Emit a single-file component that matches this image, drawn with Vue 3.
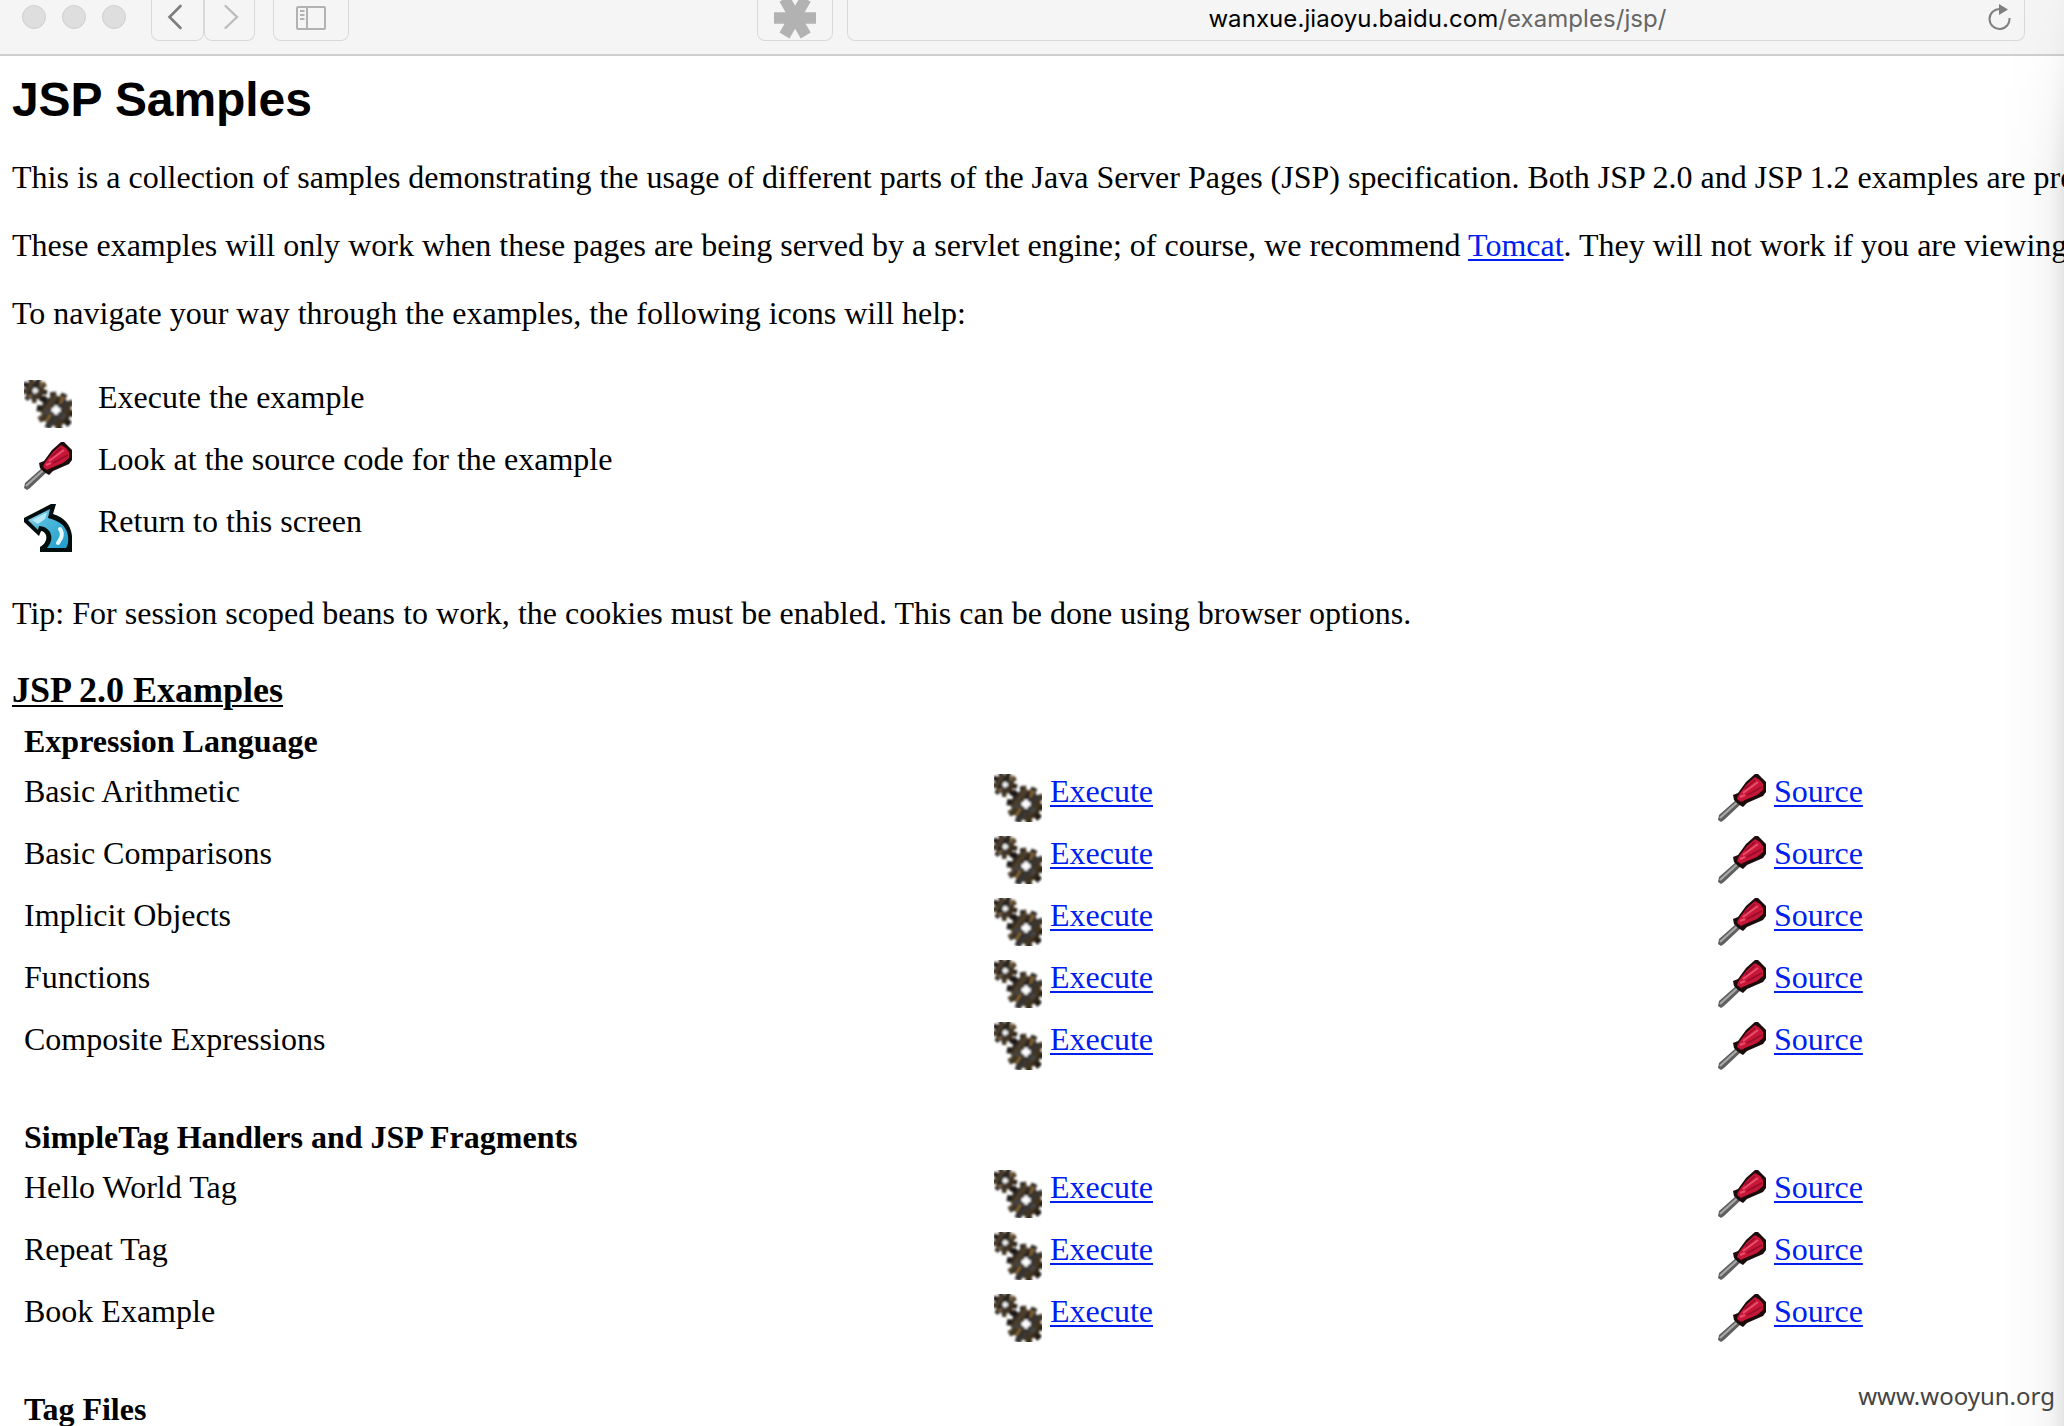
<script setup>
import { h } from 'vue'

const gearPath = (cx, cy, r, teeth, depth, turn) => {
  const pts = []
  for (let i = 0; i < teeth; i++) {
    const step = (Math.PI * 2) / teeth
    const a = i * step + turn
    for (const [k, rad] of [[-0.36, r - depth], [-0.25, r], [0.25, r], [0.36, r - depth]]) {
      pts.push(`${(cx + Math.cos(a + k * step) * rad).toFixed(1)} ${(cy + Math.sin(a + k * step) * rad).toFixed(1)}`)
    }
  }
  return `M${pts.join('L')}Z`
}
const smallGear = gearPath(10.5, 10, 13, 9, 3.4, 0.2)
const bigGear = gearPath(32, 31, 19.5, 10, 4.6, 0.15)

const GearsIcon = () =>
  h('svg', { viewBox: '0 0 48 48', width: 48, height: 48 }, [
    h('defs', [
      h('linearGradient', { id: 'metal', x1: 0, y1: 0, x2: 1, y2: 0.7 }, [
        h('stop', { offset: '0', 'stop-color': '#12100e' }),
        h('stop', { offset: '.25', 'stop-color': '#1b1917' }),
        h('stop', { offset: '.38', 'stop-color': '#54442f' }),
        h('stop', { offset: '.5', 'stop-color': '#23211f' }),
        h('stop', { offset: '.63', 'stop-color': '#363536' }),
        h('stop', { offset: '.78', 'stop-color': '#44351f' }),
        h('stop', { offset: '1', 'stop-color': '#080706' }),
      ]),
      h('filter', { id: 'soften' }, [h('feGaussianBlur', { stdDeviation: 0.9 })]),
    ]),
    h('g', { filter: 'url(#soften)' }, [
      h('path', { d: smallGear, fill: 'url(#metal)' }),
      h('path', { d: 'M16 3l3-2 1 3-4 4zM3 16l4-2 2 2-4 2z', fill: '#7c6037' }),
      h('path', { d: 'M11 8v5.500M8.500 10.700h5.500', stroke: '#f4f4f4', 'stroke-width': 2.8 }),
      h('path', { d: bigGear, fill: 'url(#metal)' }),
      h('path', { d: 'M37 16l4 1-3 6-3 2zM21 40l5-7 2 2-5 8z', fill: '#80612f' }),
      h('path', { d: 'M20 31l5-2 1 4-4 3zM38 33l5 2-4 5-3-2z', fill: '#454446' }),
      h('path', { d: 'M32 25.500v9M27.500 30h9', stroke: '#fff', 'stroke-width': 3.8 }),
    ]),
  ])

const DriverIcon = () =>
  h('svg', { viewBox: '0 0 48 48', width: 48, height: 48 }, [
    h('filter', { id: 'smooth' }, [h('feGaussianBlur', { stdDeviation: 0.75 })]),
    h('g', { filter: 'url(#smooth)' }, [
      h('path', { d: 'M0 46L1 41L18 26L23 30L6 46L3 48Z', fill: '#606060' }),
      h('path', { d: 'M2 44L19 28.500', stroke: '#a9a9a9', 'stroke-width': 2.2 }),
      h('path', { d: 'M15 21L20 19L28 8L37 0H40L48 8V18L45 22L29 29L25 33L20 30L16 26Z', fill: '#1c0a0d' }),
      h('path', { d: 'M20 22L22 19L29 10L37 3L42 6L45 10V16L39 21L27 26L23 28L19 25Z', fill: '#c81438' }),
      h('path', { d: 'M25 19L40 8M22 23L27 21', stroke: '#e8506c', 'stroke-width': 2 }),
      h('path', { d: 'M29 21L44 13M27 15L37 6', stroke: '#970f2b', 'stroke-width': 1.5 }),
    ]),
  ])

const ReturnIcon = () =>
  h('svg', { viewBox: '0 0 48 48', width: 48, height: 48 }, [
    h('defs', [
      h('linearGradient', { id: 'aqua', x1: 0, y1: 0, x2: 1, y2: 1 }, [
        h('stop', { offset: '0', 'stop-color': '#a9e2f3' }),
        h('stop', { offset: '.35', 'stop-color': '#52bade' }),
        h('stop', { offset: '1', 'stop-color': '#1f9cc9' }),
      ]),
      h('filter', { id: 'blend' }, [h('feGaussianBlur', { stdDeviation: 0.75 })]),
    ]),
    h('g', { filter: 'url(#blend)' }, [
      h('path', { d: 'M0 14L27 0H32L29 10Q46 15 48 32V48H16V43Q24 38 22 31Q20 27 17 27L15 32L0 18Z', fill: '#050809' }),
      h('path', { d: 'M4 16L26 5L24 14Q42 18 44 32Q45 40 42 44H23Q30 36 26 28Q22 22 15 22L14 26Z', fill: 'url(#aqua)' }),
      h('path', { d: 'M8 16L23 8.500L21 15L14 20Z', fill: '#b5e9f7' }),
      h('path', { d: 'M36 25Q39 29 37 34L34 39', fill: 'none', stroke: '#e4faff', 'stroke-width': 4, 'stroke-linecap': 'round' }),
    ]),
  ])

const legend = [
  { icon: GearsIcon, text: 'Execute the example' },
  { icon: DriverIcon, text: 'Look at the source code for the example' },
  { icon: ReturnIcon, text: 'Return to this screen' },
]
const groups = [
  {
    title: 'Expression Language',
    items: ['Basic Arithmetic', 'Basic Comparisons', 'Implicit Objects', 'Functions', 'Composite Expressions'],
  },
  { title: 'SimpleTag Handlers and JSP Fragments', items: ['Hello World Tag', 'Repeat Tag', 'Book Example'] },
  { title: 'Tag Files', items: [] },
]
</script>

<template>
  <div class="window">
    <header class="toolbar">
      <div class="lights"><i></i><i></i><i></i></div>
      <div class="btn back">
        <svg width="52" height="41" viewBox="0 0 52 41"><path d="M28.500 6L17.500 17L28.500 28" fill="none" stroke="#7d7d7d" stroke-width="2.600" stroke-linecap="round" /></svg>
      </div>
      <div class="btn forward">
        <svg width="51" height="41" viewBox="0 0 51 41"><path d="M20.500 6L32 17L20.500 28" fill="none" stroke="#bdbdbd" stroke-width="2.400" stroke-linecap="round" /></svg>
      </div>
      <div class="btn sidebar">
        <svg width="76" height="41" viewBox="0 0 76 41"><g fill="none" stroke="#b2b2b2" stroke-width="2"><rect x="23" y="7" width="28" height="22" rx="1" /><path d="M33 7V29M26 11H30.500M26 15H30.500M26 19H30.500" /></g></svg>
      </div>
      <div class="btn star">
        <svg width="76" height="41" viewBox="0 0 76 41"><path d="M16 18H58M26.500 -1.200L47.700 35.500M47.700 -1.200L26.500 35.500" stroke="#b2b2b2" stroke-width="11.500" fill="none" /></svg>
      </div>
      <div class="btn address">
        <span class="url">wanxue.jiaoyu.baidu.com<span class="path">/examples/jsp/</span></span>
        <svg class="reload" width="26" height="30" viewBox="0 0 26 30"><path d="M13 9A10 10 0 1 0 22.500 18" fill="none" stroke="#7f7f7f" stroke-width="2" /><path d="M12 4L21 9.500L12 15Z" fill="#7f7f7f" /></svg>
      </div>
    </header>

    <main class="page">
      <h1>JSP Samples</h1>
      <p>This is a collection of samples demonstrating the usage of different parts of the Java Server Pages (JSP) specification. Both JSP<s></s> 2.0 and JSP<s></s> 1.2 examples are presented</p>
      <p class="engine">These examples will only work when these pages are being served by a servlet engine; of course, we recommend <a>Tomcat</a>. They will not work if you are viewing</p>
      <p>To navigate your way through the examples, the following icons will help:</p>

      <div class="legend">
        <div v-for="l in legend" :key="l.text" class="legend-row">
          <component :is="l.icon" />
          <span class="label">{{ l.text }}</span>
        </div>
      </div>

      <p class="tip">Tip: For session scoped beans to work, the cookies must be enabled. This can be done using browser options.</p>
      <h2>JSP 2.0 Examples</h2>

      <section v-for="g in groups" :key="g.title">
        <h3>{{ g.title }}</h3>
        <div v-for="item in g.items" :key="item" class="row">
          <span class="label">{{ item }}</span>
          <span class="cell"><GearsIcon /><a class="label">Execute</a></span>
          <span class="cell"><DriverIcon /><a class="label">Source</a></span>
        </div>
      </section>
    </main>
    <div class="edge"></div>
    <div class="watermark">www.wooyun.org</div>
  </div>
</template>

<style>
body { margin: 0; overflow: hidden; }
</style>

<style scoped>
.window { position: relative; width: 2064px; height: 1426px; overflow: hidden; background: #fff; color: #000; font: 32px/36px "Liberation Serif", "Times New Roman", serif; }
.toolbar { box-sizing: border-box; height: 56px; display: flex; align-items: flex-start; background: #f5f5f5; border-bottom: 2px solid #cfcfcf; }
.lights { display: flex; gap: 16px; margin: 5px 25px 0 22px; }
.lights i { box-sizing: border-box; width: 24px; height: 24px; border-radius: 50%; background: #dedede; border: 1px solid #d0d0d0; }
.btn { box-sizing: border-box; height: 41px; border: 1px solid #d9d9d9; border-top: 0; border-radius: 0 0 8px 8px; overflow: hidden; }
.btn svg { display: block; }
.back { width: 53px; }
.forward { width: 51px; }
.sidebar { width: 76px; margin-left: 18px; }
.star { width: 76px; margin-left: 408px; }
.address { position: relative; flex: none; width: 1178px; margin-left: 14px; display: flex; justify-content: center; }
.url { font: 24px/28px Inter, "Liberation Sans", sans-serif; letter-spacing: .07px; margin: 5px 0 0 3px; white-space: nowrap; }
.path { color: #666; }
.reload { position: absolute; right: 11px; top: 0; }
.page { padding: 17px 12px 0; }
h1 { margin: 0 0 32px; font: bold 48px/54px "Liberation Sans", Arial, sans-serif; letter-spacing: -.08px; }
p { margin: 0 0 32px; white-space: nowrap; }
s { margin-left: -1.2px; }
.engine { word-spacing: .06px; }
a { color: #001eee; text-decoration: underline; text-decoration-thickness: 2px; text-underline-offset: 3px; text-decoration-skip-ink: none; }
.legend { padding: 17px 12px 0; }
.legend-row { display: flex; gap: 26px; height: 62px; }
.label { margin-top: -1px; }
.legend svg, .cell svg { flex: none; }
.tip { margin: 29px 0 38px; word-spacing: .06px; }
h2 { margin: 0 0 12px; font: bold 36px/42px "Liberation Serif", serif; text-decoration: underline; text-decoration-thickness: 2px; text-underline-offset: 3px; }
section { padding: 0 12px; margin-bottom: 35px; }
h3 { margin: 0 0 15px; font: bold 32px/36px "Liberation Serif", serif; }
.row { display: grid; grid-template-columns: 970px 724px 300px; height: 62px; }
.cell { display: flex; gap: 8px; }
.edge { position: absolute; inset: 0 0 0 auto; width: 64px; background: linear-gradient(to right, transparent, rgba(0, 0, 0, .015) 50%, rgba(0, 0, 0, .04) 78%, rgba(0, 0, 0, .1)); mask-image: linear-gradient(to bottom, rgba(0, 0, 0, .12), rgba(0, 0, 0, .3) 56px, #000 170px); }
.watermark { position: absolute; right: 9px; bottom: 13px; color: #444; font: 24px/34px "Noto Sans", sans-serif; }
</style>
